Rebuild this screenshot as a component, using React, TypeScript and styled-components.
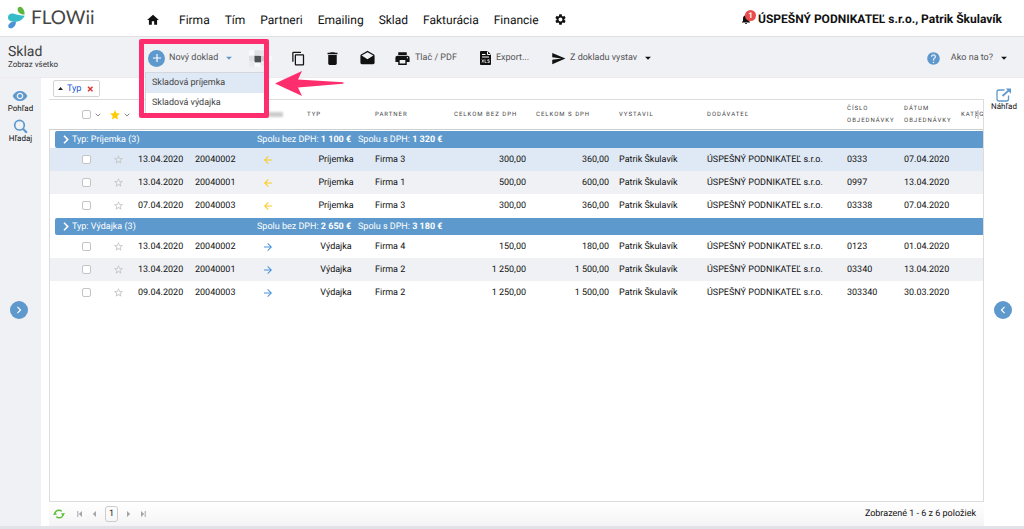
import React from 'react';
import styled, { createGlobalStyle, css } from 'styled-components';
import {
  MdAdd,
  MdArrowBack,
  MdArrowDropDown,
  MdArrowForward,
  MdChevronLeft,
  MdChevronRight,
  MdContentCopy,
  MdDelete,
  MdDrafts,
  MdHome,
  MdNotifications,
  MdPrint,
  MdSend,
  MdSettings,
  MdStar,
  MdStarBorder,
  MdHelp,
  MdRemoveRedEye,
} from 'react-icons/md';

const color = {
  blue: '#5d99cc',
  panel: '#f0f1f5',
  ink: '#111',
  grey: '#555',
  line: '#dcdcdc',
  pink: '#fe2e6e',
  selected: '#dfe9f5',
};

const GlobalStyle = createGlobalStyle`
  *, *::before, *::after { box-sizing: border-box; }
  body {
    margin: 0;
    background: #fff;
    color: ${color.ink};
    font: 9px/12px Roboto, "Liberation Sans", sans-serif;
    text-rendering: geometricPrecision;
  }
  button, input { font: inherit; color: inherit; text-rendering: inherit; }
  button { background: none; border: 0; padding: 0; cursor: pointer; }
  a { color: inherit; text-decoration: none; }
  svg { display: block; flex: none; }
`;

const Page = styled.div`
  display: flex;
  flex-direction: column;
  min-height: 100vh;
`;

const Header = styled.header`
  display: flex;
  align-items: center;
  height: 37px;
  padding: 0 22px 0 8px;
  border-bottom: 1px solid #e0e0e2;
`;

const Logo = styled.a`
  display: flex;
  align-items: center;
  gap: 5px;
  width: 138px;
  height: 36px;
  color: #454545;
  font: 19px/24px Lato, sans-serif;
`;

const Nav = styled.nav`
  display: flex;
  align-items: center;
  gap: 15px;
  flex: 1;
  font-size: 12px;
  line-height: 16px;
  padding-top: 3px;

  a:first-child { margin-right: 4px; }
`;

const Account = styled.a`
  display: flex;
  align-items: center;
  gap: 2px;
  font-size: 12px;
  line-height: 16px;
  font-weight: 700;
  padding-top: 1px;
`;

const Bell = styled.span`
  position: relative;
  width: 16px;
`;

const Badge = styled.span`
  position: absolute;
  top: -3px;
  left: 5px;
  width: 11px;
  height: 11px;
  border-radius: 50%;
  background: #ea4c4c;
  color: #fff;
  font-size: 8px;
  line-height: 11px;
  text-align: center;
`;

const Toolbar = styled.div`
  display: flex;
  align-items: center;
  height: 41px;
  padding: 2px 13px 0 8px;
  background: ${color.panel};
  border-bottom: 1px solid #efe8ee;
`;

const TitleBlock = styled.div`
  width: 140px;
  padding-bottom: 2px;
`;

const Title = styled.h1`
  margin: 0;
  color: #3f3f3f;
  font-size: 14px;
  line-height: 15px;
  font-weight: 400;
`;

const Subtitle = styled.div`
  color: #333;
  font-size: 8px;
  line-height: 10px;
`;

const Tools = styled.div`
  display: flex;
  align-items: center;
  flex: 1;
  gap: 18px;
`;

const ToolGroup = styled.div<{ $gap: number }>`
  display: flex;
  align-items: center;
  gap: ${(p) => p.$gap}px;
`;

const ToolButton = styled.button`
  display: flex;
  align-items: center;
  gap: 4px;
  color: ${color.grey};
  white-space: nowrap;

  & > svg { color: ${color.ink}; }
`;

const NewDocument = styled.div`
  position: relative;
  width: 101px;

  ${ToolButton} > svg:last-child { color: ${color.blue}; }
`;

const PlusDisc = styled.span`
  display: grid;
  place-items: center;
  width: 17px;
  height: 17px;
  border-radius: 50%;
  background: ${color.blue};
  color: #fff;
`;

const Menu = styled.ul`
  position: absolute;
  z-index: 2;
  top: 22px;
  left: -3px;
  width: 120px;
  margin: 0;
  padding: 0;
  list-style: none;
  background: #fff;
  border: 1px solid #d4d8dc;
`;

const MenuItem = styled.button<{ $active?: boolean }>`
  display: block;
  width: 100%;
  height: 20px;
  padding: 0 6px;
  color: #444;
  text-align: left;
  background: ${(p) => (p.$active ? color.selected : '#fff')};
`;

const Highlight = styled.div`
  position: absolute;
  z-index: 3;
  top: -11px;
  left: -9px;
  width: 130px;
  height: 79px;
  border: 5px solid ${color.pink};
  border-radius: 2px;
  pointer-events: none;
`;

const Pointer = styled.svg`
  position: absolute;
  z-index: 3;
  top: 20px;
  left: 127px;
`;

const Spread = styled.span`
  flex: 1;
`;

const Body = styled.div`
  display: flex;
  flex: 1;
`;

const Side = styled.aside<{ $tinted?: boolean }>`
  position: relative;
  display: flex;
  flex-direction: column;
  align-items: center;
  gap: 6px;
  width: ${(p) => (p.$tinted ? 41 : 40)}px;
  padding-top: 10px;
  background: ${(p) => (p.$tinted ? color.panel : '#fff')};
`;

const SideButton = styled.button`
  display: flex;
  flex-direction: column;
  align-items: center;
  font-size: 8px;
  line-height: 9px;
  white-space: nowrap;

  svg { color: ${color.blue}; }
`;

const RoundButton = styled.button`
  position: absolute;
  top: 50%;
  left: 10px;
  display: grid;
  place-items: center;
  width: 18px;
  height: 18px;
  margin-top: -1px;
  border-radius: 50%;
  background: ${color.blue};
  color: #fff;
`;

const Main = styled.main`
  display: flex;
  flex-direction: column;
  flex: 1;
  min-width: 0;
  padding-left: 8px;
`;

const Filters = styled.div`
  display: flex;
  height: 21px;
  padding: 2px 4px;
`;

const Chip = styled.button`
  display: flex;
  align-items: center;
  gap: 4px;
  height: 17px;
  padding: 0 4px;
  color: #1a56d6;
  background: #fff;
  border: 1px solid #d3d3d3;
  border-radius: 2px;
`;

const GridBox = styled.div`
  display: flex;
  flex-direction: column;
  flex: 1;
  overflow: hidden;
  border: solid ${color.line};
  border-width: 1px 1px 1px 0;
`;

const EmptyArea = styled.div`
  flex: 1;
  border-left: 1px solid ${color.line};
`;

const Table = styled.table`
  width: 100%;
  table-layout: fixed;
  border-collapse: separate;
  border-spacing: 0;

  col.check { width: 59px; }
  col.star { width: 25px; }
  col.date { width: 57px; }
  col.number { width: 67px; }
  col.arrow { width: 45px; }
  col.type { width: 68px; }
  col.partner { width: 79px; }
  col.net { width: 82px; }
  col.gross { width: 83px; }
  col.issuer { width: 88px; }
  col.order { width: 57px; }
  col.orderDate { width: 57px; }
  col.category { width: 27px; }
`;

const Th = styled.th<{ $tight?: boolean }>`
  position: relative;
  height: 30px;
  padding: 0 0 0 ${(p) => (p.$tight ? 1 : 5)}px;
  border-bottom: 1px solid #cfcfcf;
  color: #444;
  font-size: 6px;
  line-height: 12px;
  font-weight: 400;
  letter-spacing: 1px;
  text-align: left;
  white-space: nowrap;
  overflow: hidden;
`;

const Td = styled.td<{ $align?: 'right' | 'center' }>`
  height: 23px;
  padding: 0 5px;
  text-align: ${(p) => p.$align ?? 'left'};
  white-space: nowrap;
`;

const Row = styled.tr<{ $tone: 'plain' | 'striped' | 'selected' }>`
  ${(p) => p.$tone === 'striped' && css`background: ${color.panel};`}
  ${(p) => p.$tone === 'selected' && css`background: ${color.selected};`}
`;

const TableBody = styled.tbody`
  td:first-child { border-left: 1px solid ${color.line}; }
`;

const GroupCell = styled.td`
  height: 18px;
  padding: 1px 0 0 5px;
`;

const GroupBar = styled.div`
  display: grid;
  grid-template-columns: 202px 101px 1fr;
  align-items: center;
  height: 17px;
  color: #fff;
  background: ${color.blue};
  border-radius: 2px 0 0 2px;
`;

const GroupName = styled.span`
  display: flex;
  align-items: center;
  gap: 1px;
  padding-left: 3px;
`;

const CheckLine = styled.span`
  display: flex;
  align-items: center;
  gap: 4px;
  padding-left: 28px;

  td & { padding-left: 27px; }
`;

const StarLine = styled.span`
  display: flex;
  align-items: center;
  gap: 3px;
  color: #fc0;
`;

const Check = styled.input`
  appearance: none;
  width: 9px;
  height: 9px;
  margin: 0;
  background: #fff;
  border: 1px solid #c4c4c4;
  border-radius: 2px;
`;

const RowStar = styled.button`
  display: block;
  color: #c4c4c4;
`;

const Direction = styled.span<{ $incoming: boolean }>`
  display: block;
  color: ${(p) => (p.$incoming ? '#fccb1c' : '#4a94dc')};
`;

const Blurred = styled.span`
  display: block;
  width: 21px;
  height: 5px;
  background: #ccc;
  filter: blur(1px);
`;

const ResizeMark = styled.svg`
  position: absolute;
  top: 10px;
  left: 18px;
`;

const Footer = styled.footer`
  display: flex;
  align-items: center;
  justify-content: space-between;
  height: 24px;
  padding: 0 8px 0 4px;
  background: linear-gradient(#fff, #f4f4f6);
`;

const Pager = styled.div`
  display: flex;
  align-items: center;
  gap: 8px;
  color: #a5a5a5;

  & > :first-child { margin-right: 4px; }
`;

const PageNumber = styled.button`
  width: 13px;
  height: 16px;
  color: #222;
  border: 1px solid #ccc;
  border-radius: 3px;
`;

const Shade = styled.div`
  height: 3px;
  background: #e2e2e9;
`;

function FlowiiMark() {
  return (
    <svg width="18" height="24" viewBox="0 0 18 24" aria-hidden="true">
      <path d="M9.600 3.400C9.400 1 12.200-.2 14 1.600c2 1.900 2.700 4.200 2.600 7-2.600-.2-4.800-.9-6-2.400-.6-.8-1-1.800-1-2.800z" fill="#5fb63e" />
      <path d="M0 11.400C0 8.400 3 6.800 6 7.800c3 .9 6.500 1.900 10.800 1.900-1.600 3.500-5 5.700-8.800 6C3.800 16.100 0 14.600 0 11.400z" fill="#35bcc8" />
      <path d="M.3 20C.7 17 3.800 15.600 7.900 15.600c.2 2.800-1 5-3 6.100C2.600 23 0 22.200.3 20z" fill="#4b93d4" />
    </svg>
  );
}

function ExportIcon() {
  return (
    <svg width="13" height="16" viewBox="0 0 13 16" aria-hidden="true">
      <path d="M1.500 1h7L12 4.500V14a1 1 0 0 1-1 1H2a1 1 0 0 1-1-1V1.500z" fill="currentColor" />
      <path d="M8.500 1.500v3H11.500M3 4.500h3.500M3 7h7" stroke="#fff" fill="none" />
      <path d="M3 9.500l1.800 3M4.800 9.500L3 12.500M6 9.500v3h1.500M10.500 9.800H8.800V11h1.500v1.500H8.500" stroke="#fff" strokeWidth=".7" fill="none" />
    </svg>
  );
}

function PixelatedIcon() {
  return (
    <svg width="24" height="20" viewBox="0 0 22 18" aria-hidden="true">
      <path d="M0 2h5v5H0zM5 12h5v5H5zM16 7h5v5h-5z" fill="#fafafc" />
      <path d="M0 7h5v5H0zM5 2h5v5H5z" fill="#dfe0e4" />
      <path d="M5 7h6v6H5z" fill="#505155" />
      <path d="M11 7h5v5h-5z" fill="#c9cacd" />
      <path d="M10 2h5v5h-5z" fill="#e3e4e8" />
      <path d="M0 12h5v5H0zM11 12h5v4h-5z" fill="#e8e9ed" />
    </svg>
  );
}

function PreviewIcon() {
  return (
    <svg width="16" height="14" viewBox="0 0 16 14" fill="none" stroke="currentColor" aria-hidden="true">
      <path d="M8.500 2H3a2 2 0 0 0-2 2v7a2 2 0 0 0 2 2h7.500a2 2 0 0 0 2-2V7.500" strokeWidth="1.300" />
      <path d="M6.500 8L13 2.200" strokeWidth="1.800" />
      <path d="M9.800.5H15v5.200z" fill="currentColor" stroke="none" />
    </svg>
  );
}

function SearchIcon() {
  return (
    <svg width="15" height="15" viewBox="0 0 15 15" fill="none" stroke="currentColor" aria-hidden="true">
      <circle cx="6.500" cy="6.200" r="4.800" strokeWidth="1.700" />
      <path d="M10 9.800l3.800 4" strokeWidth="2.200" />
    </svg>
  );
}

function RefreshIcon() {
  return (
    <svg width="12" height="10" viewBox="0 0 12 10" fill="none" stroke="#5fbf3a" strokeWidth="1.400" aria-hidden="true">
      <path d="M2 4.500C2.300 2.500 4 1.200 6 1.200c1.200 0 2.100.4 2.800 1M10 5.500C9.700 7.500 8 8.800 6 8.800c-1.200 0-2.100-.4-2.800-1" />
      <path d="M0 6L1.800 3 4.200 5.600zM12 4l-1.800 3L7.800 4.400z" fill="#5fbf3a" stroke="none" />
    </svg>
  );
}

function PagerIcon({ back, end }: { back?: boolean; end?: boolean }) {
  return (
    <svg width="6" height="6" viewBox="0 0 6 6" fill="currentColor" aria-hidden="true">
      <g transform={back ? 'matrix(-1 0 0 1 6 0)' : undefined}>
        <path d="M1 0l3.200 3L1 6z" />
        {end && <path d="M4.700 0h1v6h-1z" />}
      </g>
    </svg>
  );
}

function SmallChevron() {
  return (
    <svg width="6" height="4" viewBox="0 0 6 4" fill="none" stroke="#888" aria-hidden="true">
      <path d="M.7.7L3 3 5.300.7" />
    </svg>
  );
}

function GroupChevron() {
  return (
    <svg width="13" height="9" viewBox="0 0 13 9" fill="none" stroke="#fff" strokeWidth="1.600" aria-hidden="true">
      <path d="M6 .8l3.700 3.700L6 8.200" />
    </svg>
  );
}

const navItems = ['Firma', 'Tím', 'Partneri', 'Emailing', 'Sklad', 'Fakturácia', 'Financie'];

type Doc = {
  date: string;
  number: string;
  partner: string;
  net: string;
  gross: string;
  order: string;
  orderDate: string;
  tone: 'plain' | 'striped' | 'selected';
};

type Group = { type: string; net: string; gross: string; incoming: boolean; docs: Doc[] };

const groups: Group[] = [
  {
    type: 'Príjemka',
    net: '1 100 €',
    gross: '1 320 €',
    incoming: true,
    docs: [
      { date: '13.04.2020', number: '20040002', partner: 'Firma 3', net: '300,00', gross: '360,00', order: '0333', orderDate: '07.04.2020', tone: 'selected' },
      { date: '13.04.2020', number: '20040001', partner: 'Firma 1', net: '500,00', gross: '600,00', order: '0997', orderDate: '13.04.2020', tone: 'striped' },
      { date: '07.04.2020', number: '20040003', partner: 'Firma 3', net: '300,00', gross: '360,00', order: '03338', orderDate: '07.04.2020', tone: 'plain' },
    ],
  },
  {
    type: 'Výdajka',
    net: '2 650 €',
    gross: '3 180 €',
    incoming: false,
    docs: [
      { date: '13.04.2020', number: '20040002', partner: 'Firma 4', net: '150,00', gross: '180,00', order: '0123', orderDate: '01.04.2020', tone: 'plain' },
      { date: '13.04.2020', number: '20040001', partner: 'Firma 2', net: '1 250,00', gross: '1 500,00', order: '03340', orderDate: '13.04.2020', tone: 'striped' },
      { date: '09.04.2020', number: '20040003', partner: 'Firma 2', net: '1 250,00', gross: '1 500,00', order: '303340', orderDate: '30.03.2020', tone: 'plain' },
    ],
  },
];

const columns = ['check', 'star', 'date', 'number', 'arrow', 'type', 'partner', 'net', 'gross', 'issuer', 'supplier', 'order', 'orderDate', 'category'];

function DocumentRow({ doc, group }: { doc: Doc; group: Group }) {
  return (
    <Row $tone={doc.tone}>
      <Td>
        <CheckLine><Check type="checkbox" aria-label={`Označiť ${doc.number}`} /></CheckLine>
      </Td>
      <Td>
        <RowStar aria-label="Obľúbené"><MdStarBorder size={11} /></RowStar>
      </Td>
      <Td>{doc.date}</Td>
      <Td>{doc.number}</Td>
      <Td>
        <Direction $incoming={group.incoming}>
          {group.incoming ? <MdArrowBack size={12} /> : <MdArrowForward size={12} />}
        </Direction>
      </Td>
      <Td $align="center">{group.type}</Td>
      <Td>{doc.partner}</Td>
      <Td $align="right">{doc.net}</Td>
      <Td $align="right">{doc.gross}</Td>
      <Td>Patrik Škulavík</Td>
      <Td>ÚSPEŠNÝ PODNIKATEĽ s.r.o.</Td>
      <Td>{doc.order}</Td>
      <Td>{doc.orderDate}</Td>
      <Td />
    </Row>
  );
}

function DocumentTable() {
  return (
    <Table>
      <colgroup>
        {columns.map((name) => <col key={name} className={name} />)}
      </colgroup>
      <thead>
        <tr>
          <Th>
            <CheckLine><Check type="checkbox" aria-label="Označiť všetko" /><SmallChevron /></CheckLine>
          </Th>
          <Th $tight><StarLine><MdStar size={12} /><SmallChevron /></StarLine></Th>
          <Th />
          <Th />
          <Th><Blurred /></Th>
          <Th>TYP</Th>
          <Th>PARTNER</Th>
          <Th>CELKOM BEZ DPH</Th>
          <Th>CELKOM S DPH</Th>
          <Th>VYSTAVIL</Th>
          <Th>DODÁVATEĽ</Th>
          <Th>ČÍSLO<br />OBJEDNÁVKY</Th>
          <Th>DÁTUM<br />OBJEDNÁVKY</Th>
          <Th>
            KATEGÓRIA
            <ResizeMark width="6" height="9" viewBox="0 0 6 9" aria-hidden="true">
              <path d="M1.500 1v7M4 0v9" stroke="#b5b5b5" fill="none" />
            </ResizeMark>
          </Th>
        </tr>
      </thead>
      <TableBody>
        {groups.map((group) => (
          <React.Fragment key={group.type}>
            <tr>
              <GroupCell colSpan={columns.length}>
                <GroupBar>
                  <GroupName><GroupChevron />Typ: {group.type} ({group.docs.length})</GroupName>
                  <span>Spolu bez DPH: <b>{group.net}</b></span>
                  <span>Spolu s DPH: <b>{group.gross}</b></span>
                </GroupBar>
              </GroupCell>
            </tr>
            {group.docs.map((doc) => <DocumentRow key={doc.number} doc={doc} group={group} />)}
          </React.Fragment>
        ))}
      </TableBody>
    </Table>
  );
}

export default function App() {
  return (
    <Page>
      <GlobalStyle />
      <Header>
        <Logo href="#"><FlowiiMark />FLOWii</Logo>
        <Nav>
          <a href="#" aria-label="Domov"><MdHome size={14} /></a>
          {navItems.map((item) => <a key={item} href="#">{item}</a>)}
          <a href="#" aria-label="Nastavenia"><MdSettings size={13} /></a>
        </Nav>
        <Account href="#">
          <Bell><MdNotifications size={12} /><Badge>1</Badge></Bell>
          ÚSPEŠNÝ PODNIKATEĽ s.r.o., Patrik Škulavík
        </Account>
      </Header>

      <Toolbar>
        <TitleBlock>
          <Title>Sklad</Title>
          <Subtitle>Zobraz všetko</Subtitle>
        </TitleBlock>
        <Tools>
          <ToolGroup $gap={0}>
            <NewDocument>
              <ToolButton>
                <PlusDisc><MdAdd size={14} /></PlusDisc>
                Nový doklad
                <MdArrowDropDown size={14} />
              </ToolButton>
              <Menu>
                <li><MenuItem $active>Skladová príjemka</MenuItem></li>
                <li><MenuItem>Skladová výdajka</MenuItem></li>
              </Menu>
              <Highlight />
              <Pointer width="70" height="28" viewBox="0 0 70 28" aria-hidden="true">
                <path d="M0 13.500L27 1l-4 8.500 45 2.800q1.500.7 0 1.400L23 17.500 27 26z" fill={color.pink} />
              </Pointer>
            </NewDocument>
            <PixelatedIcon />
          </ToolGroup>
          <ToolButton aria-label="Kopírovať"><MdContentCopy size={15} /></ToolButton>
          <ToolButton aria-label="Zmazať"><MdDelete size={17} /></ToolButton>
          <ToolButton aria-label="Odoslať"><MdDrafts size={17} /></ToolButton>
          <ToolGroup $gap={22}>
            <ToolButton><MdPrint size={17} />Tlač / PDF</ToolButton>
            <ToolButton><ExportIcon />Export...</ToolButton>
            <ToolButton><MdSend size={15} />Z dokladu vystav<MdArrowDropDown size={14} /></ToolButton>
          </ToolGroup>
          <Spread />
          <ToolGroup $gap={10}>
            <ToolButton aria-label="Pomoc"><MdHelp size={15} color={color.blue} /></ToolButton>
            <ToolButton>Ako na to?<MdArrowDropDown size={14} /></ToolButton>
          </ToolGroup>
        </Tools>
      </Toolbar>

      <Body>
        <Side $tinted>
          <SideButton><MdRemoveRedEye size={16} />Pohľad</SideButton>
          <SideButton><SearchIcon />Hľadaj</SideButton>
          <RoundButton aria-label="Rozbaliť"><MdChevronRight size={14} /></RoundButton>
        </Side>
        <Main>
          <Filters>
            <Chip>
              <svg width="5" height="3" viewBox="0 0 5 3" aria-hidden="true"><path d="M0 3L2.500 0 5 3z" fill="#222" /></svg>
              Typ
              <svg width="10" height="6" viewBox="2 0 10 6" aria-hidden="true"><path d="M5 .7l4.500 4.600M9.500.7L5 5.300" stroke="#e03535" strokeWidth="1.500" /></svg>
            </Chip>
          </Filters>
          <GridBox>
            <DocumentTable />
            <EmptyArea />
          </GridBox>
          <Footer>
            <Pager>
              <button aria-label="Obnoviť"><RefreshIcon /></button>
              <button aria-label="Prvá strana"><PagerIcon back end /></button>
              <button aria-label="Predchádzajúca strana"><PagerIcon back /></button>
              <PageNumber>1</PageNumber>
              <button aria-label="Ďalšia strana"><PagerIcon /></button>
              <button aria-label="Posledná strana"><PagerIcon end /></button>
            </Pager>
            <span>Zobrazené 1 - 6 z 6 položiek</span>
          </Footer>
        </Main>
        <Side>
          <SideButton><PreviewIcon />Náhľad</SideButton>
          <RoundButton aria-label="Zobraziť náhľad"><MdChevronLeft size={14} /></RoundButton>
        </Side>
      </Body>
      <Shade />
    </Page>
  );
}
